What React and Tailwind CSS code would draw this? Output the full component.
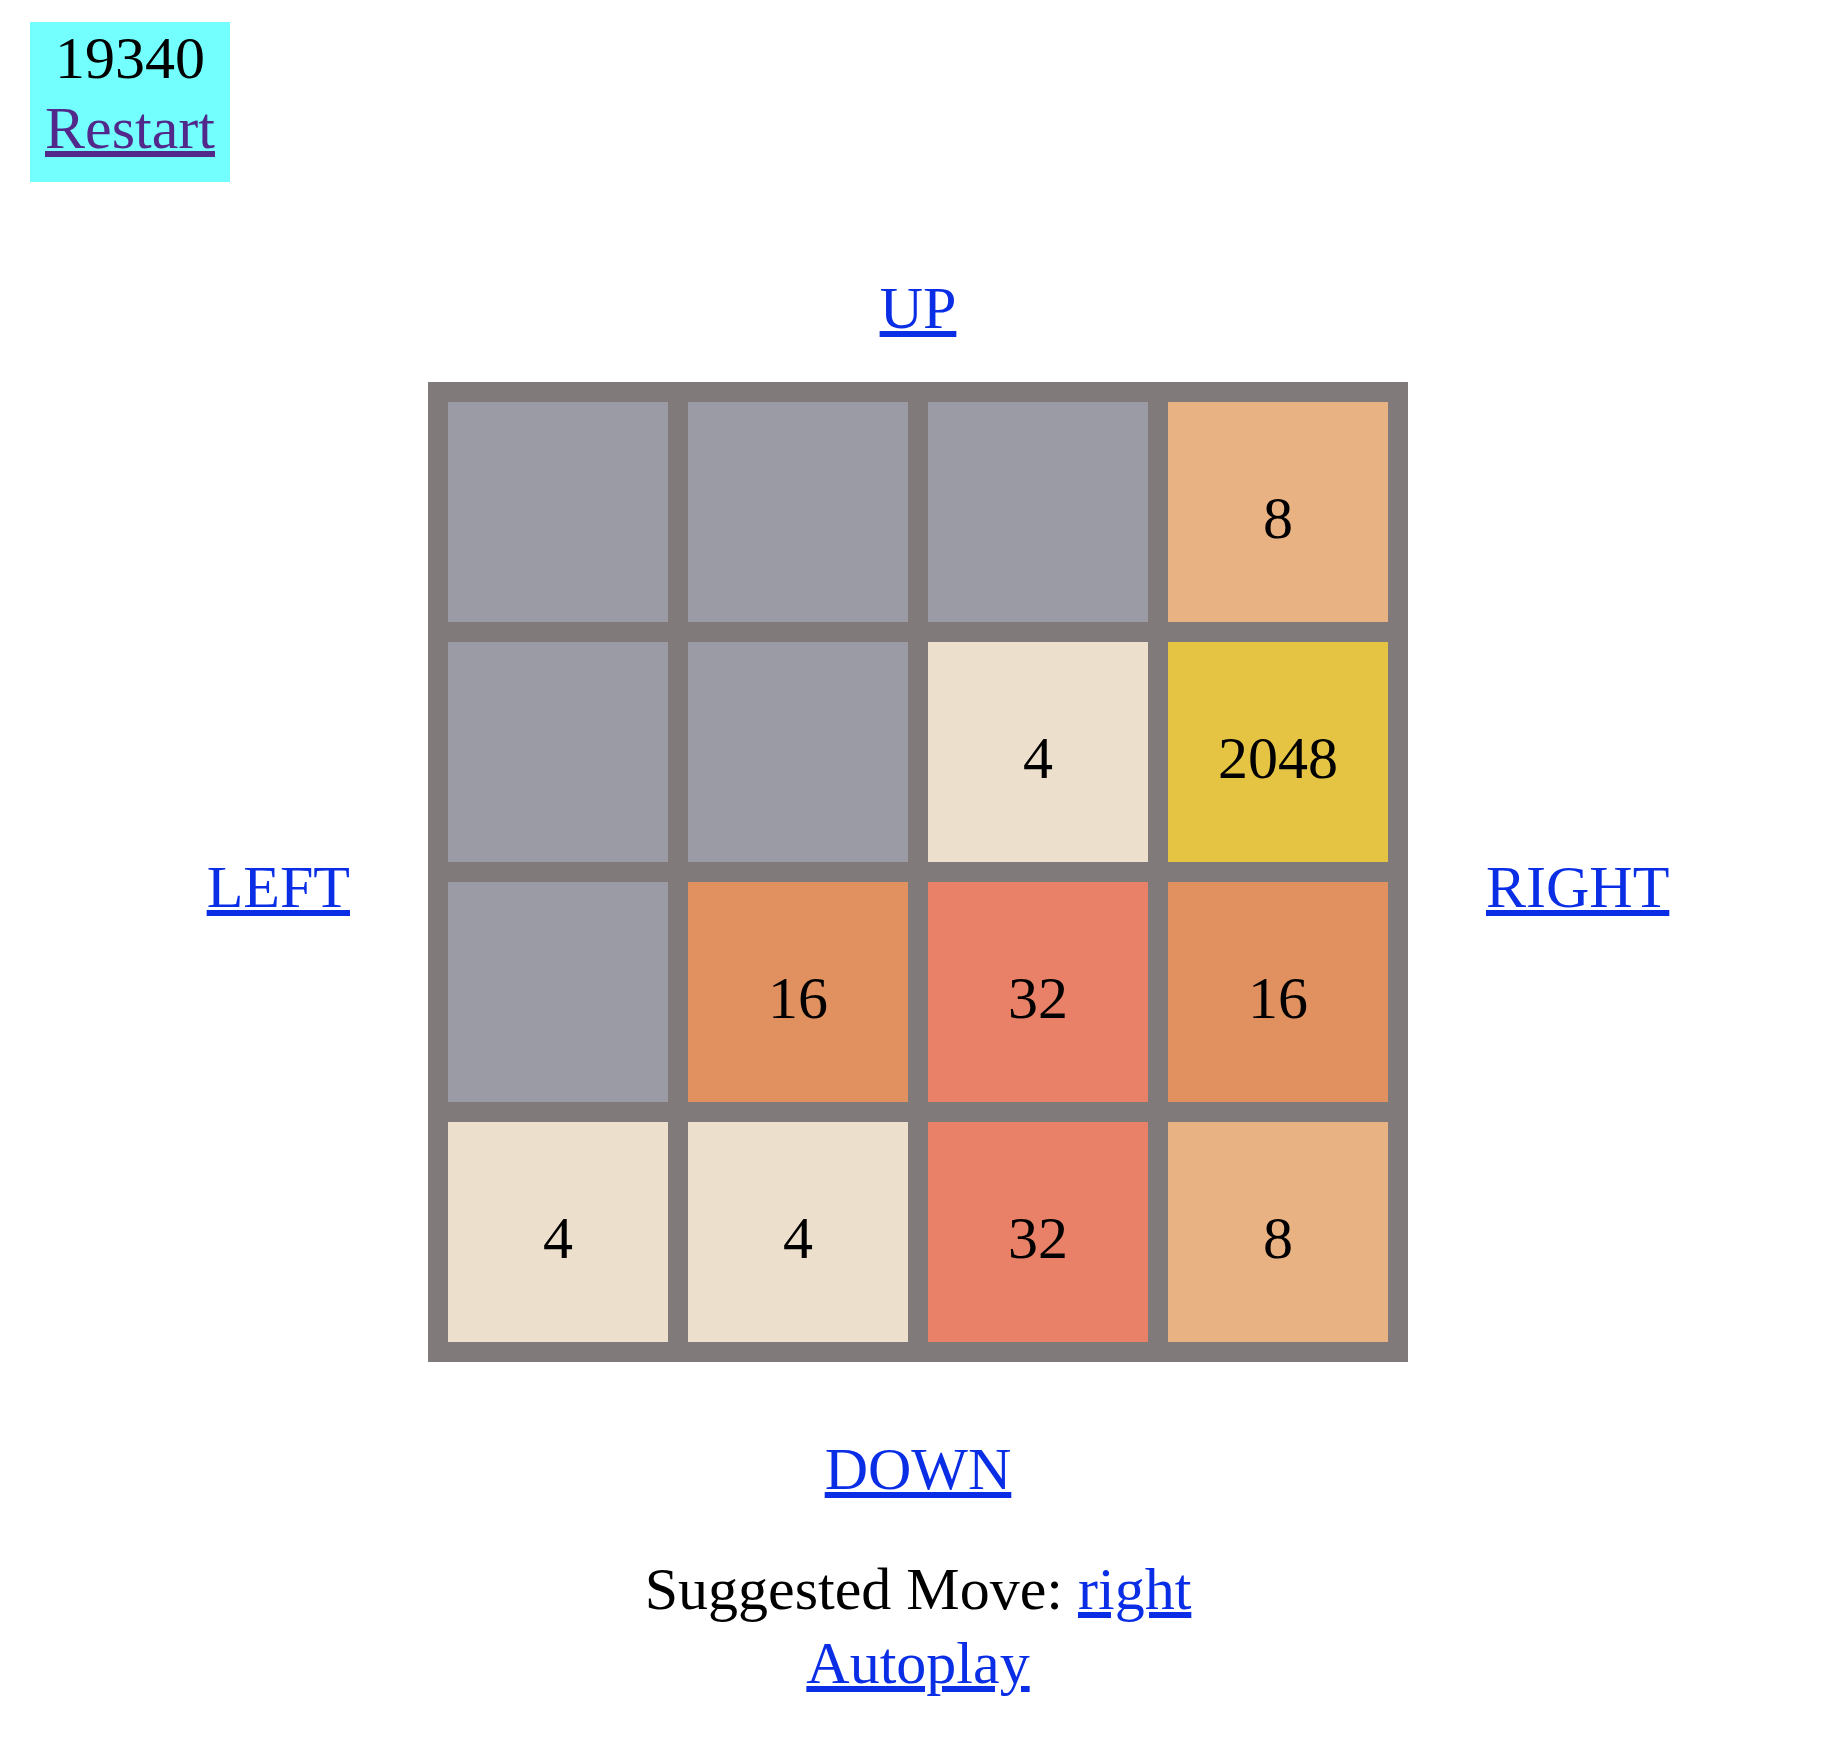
// 2048 ボード画面（スコア、方向リンク、盤面、おすすめの手）
const board = [
  [0, 0, 0, 8],
  [0, 0, 4, 2048],
  [0, 16, 32, 16],
  [4, 4, 32, 8],
];

// 数字ごとのタイル色
const tileColor = {
  0: 'bg-[#9b9ba6]',
  4: 'bg-[#ecdfcc]',
  8: 'bg-[#e9b282]',
  16: 'bg-[#e0915f]',
  32: 'bg-[#e88168]',
  2048: 'bg-[#e6c443]',
};

function MoveLink({ children, className = '' }) {
  return (
    <a href="#" className={`text-[#0a2ee6] underline ${className}`}>
      {children}
    </a>
  );
}

function Tile({ value }) {
  return (
    <div className={`w-[220px] h-[220px] flex items-center justify-center pt-3 ${tileColor[value]}`}>
      {value > 0 ? value : ''}
    </div>
  );
}

export default function App() {
  return (
    <div className="min-h-screen bg-white text-black font-['Liberation_Serif',serif] text-[60px] leading-[69px]">
      {/* スコアとリスタート */}
      <div className="ml-[30px] pt-[22px]">
        <div className="w-[200px] h-[160px] pt-px bg-[#72fffe] flex flex-col items-center leading-[70px]">
          <span>19340</span>
          <a href="#" className="text-[#52288b] underline">Restart</a>
        </div>
      </div>

      <div className="mt-[92px] text-center">
        <MoveLink>UP</MoveLink>
      </div>

      {/* 盤面と左右の操作 */}
      <div className="mt-[39px] grid grid-cols-[1fr_980px_1fr] gap-x-[78px]">
        <div className="self-center justify-self-end pt-[30px]">
          <MoveLink>LEFT</MoveLink>
        </div>
        <div className="bg-[#807a7a] p-5 grid grid-cols-4 gap-5">
          {board.flat().map((v, i) => (
            <Tile key={i} value={v} />
          ))}
        </div>
        <div className="self-center justify-self-start pt-[30px]">
          <MoveLink>RIGHT</MoveLink>
        </div>
      </div>

      <div className="mt-[73px] text-center">
        <MoveLink>DOWN</MoveLink>
      </div>

      <div className="mt-[51px] text-center">
        Suggested Move: <MoveLink>right</MoveLink>
      </div>
      <div className="mt-[5px] text-center">
        <MoveLink>Autoplay</MoveLink>
      </div>
    </div>
  );
}
